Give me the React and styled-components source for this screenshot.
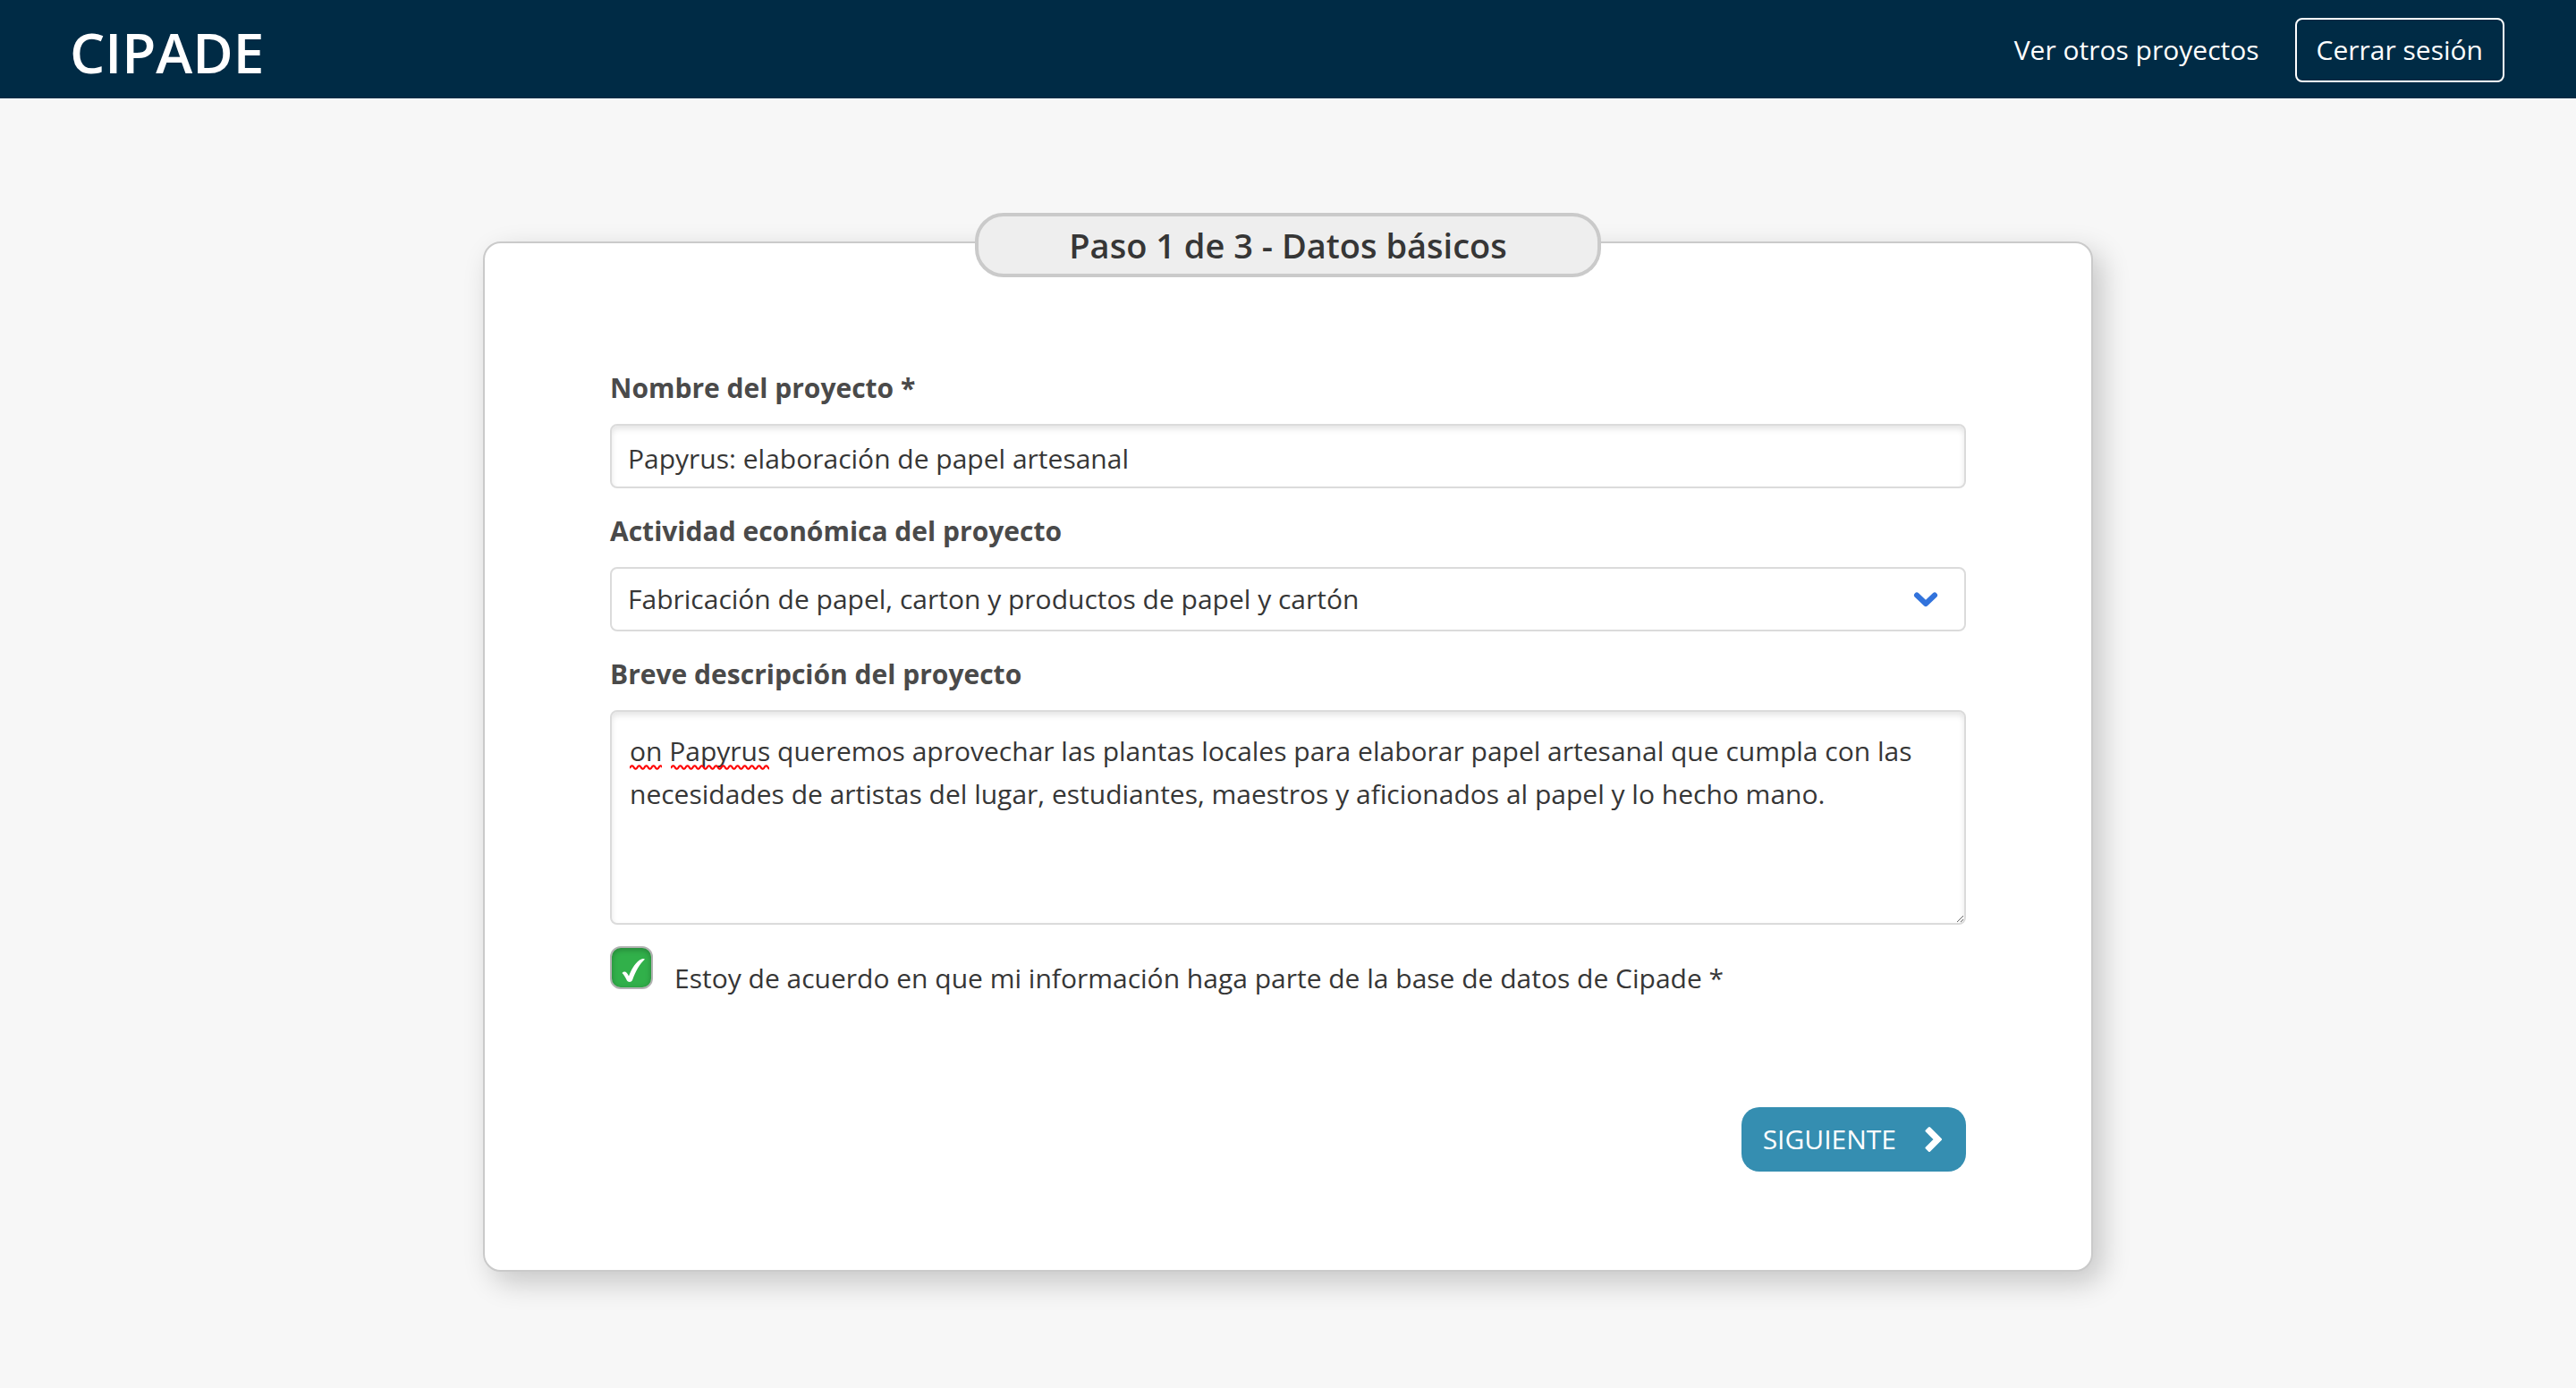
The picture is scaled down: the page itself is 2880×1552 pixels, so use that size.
import React, { useState } from "react";
import styled, { createGlobalStyle, css } from "styled-components";

const GlobalStyle = createGlobalStyle`
  *, *::before, *::after { box-sizing: border-box; }
  body {
    margin: 0;
    background: #f7f7f7;
    color: #363636;
    font-family: "Open Sans", "Noto Sans", sans-serif;
    font-size: 30px;
    line-height: 48px;
  }
  input, select, textarea, button { font: inherit; color: inherit; margin: 0; }
`;

const TopBar = styled.header`
  display: flex;
  align-items: center;
  justify-content: space-between;
  padding: 20px 80px 18px 78px;
  background: #002b45;
  color: #fff;
`;

const Brand = styled.a`
  padding-top: 4px;
  color: inherit;
  font-size: 62px;
  font-weight: 600;
  line-height: 64px;
  text-decoration: none;
`;

const Nav = styled.nav`
  display: flex;
  align-items: center;
  gap: 40px;
`;

const NavLink = styled.a`
  color: inherit;
  text-decoration: none;
`;

const LogoutButton = styled.button`
  height: 72px;
  padding: 0 22px;
  border: 2px solid #fff;
  border-radius: 8px;
  background: transparent;
`;

const Main = styled.main`
  display: flex;
  justify-content: center;
  padding: 160px 24px 130px;
`;

const Card = styled.section`
  display: flex;
  flex-direction: column;
  width: 100%;
  max-width: 1800px;
  border: 2px solid #cacaca;
  border-radius: 20px;
  background: #fff;
  box-shadow: 10px 12px 32px rgba(0, 0, 0, 0.2);
`;

const StepTitle = styled.h1`
  align-self: center;
  width: 700px;
  margin: -34px 0 0;
  padding: 8px 24px;
  border: 4px solid #cacaca;
  border-radius: 32px;
  background: #eee;
  font-size: 38px;
  font-weight: 600;
  line-height: 48px;
  text-align: center;
`;

const Form = styled.form`
  display: flex;
  flex-direction: column;
  gap: 24px;
  padding: 100px 140px 110px;
`;

const Field = styled.div`
  display: flex;
  flex-direction: column;
  gap: 16px;
`;

const Label = styled.label`
  color: #4a4a4a;
  font-weight: 700;
`;

const Control = styled.div`
  position: relative;
  display: flex;
`;

const boxed = css`
  width: 100%;
  border: 2px solid #dbdbdb;
  border-radius: 8px;
  background: #fff;
  outline: none;
`;

const TextInput = styled.input`
  ${boxed}
  height: 72px;
  padding: 4px 18px 0;
  box-shadow: inset 0 4px 6px rgba(10, 10, 10, 0.1);
`;

const Select = styled.select`
  ${boxed}
  height: 72px;
  padding: 0 80px 0 18px;
  appearance: none;
`;

const SelectArrow = styled.svg`
  position: absolute;
  top: 24px;
  right: 30px;
  width: 30px;
  height: 24px;
  pointer-events: none;
`;

const TextArea = styled.textarea`
  ${boxed}
  height: 240px;
  padding: 20px;
  resize: vertical;
  box-shadow: inset 0 4px 6px rgba(10, 10, 10, 0.1);
`;

const SpellMark = styled.svg`
  position: absolute;
  top: 61px;
  left: ${(p) => p.$start}px;
  width: ${(p) => p.$length}px;
  height: 6px;
  pointer-events: none;
`;

const ConsentRow = styled.div`
  display: flex;
  align-items: flex-start;
  gap: 24px;
`;

const TickBox = styled.div`
  position: relative;
  display: flex;
`;

const Checkbox = styled.input`
  appearance: none;
  width: 48px;
  height: 48px;
  border: 2px solid #b2b2b2;
  border-radius: 12px;
  background: #fff;
  box-shadow: inset 0 2px 6px rgba(0, 0, 0, 0.25);

  &:checked { background: #31b04a; }
  &:not(:checked) + svg { display: none; }
`;

const Tick = styled.svg`
  position: absolute;
  top: 0;
  left: 0;
  width: 48px;
  height: 48px;
  pointer-events: none;
`;

const ConsentLabel = styled.label`
  padding-top: 12px;
`;

const Actions = styled.div`
  display: flex;
  justify-content: flex-end;
  padding-top: 96px;
`;

const NextButton = styled.button`
  display: flex;
  align-items: center;
  gap: 32px;
  height: 72px;
  padding: 0 26px 0 24px;
  border: 0;
  border-radius: 20px;
  background: #358eb1;
  color: #fff;

  svg { width: 20px; height: 30px; }
`;

function Squiggle({ start, length }) {
  let d = "M0 4";
  for (let x = 0; x < length; x += 8) d += " q2 -4 4 -2 q2 4 4 2";
  return (
    <SpellMark $start={start} $length={length} aria-hidden="true">
      <path d={d} fill="none" stroke="#ff0000" strokeWidth="2" />
    </SpellMark>
  );
}

const DESCRIPTION =
  "on Papyrus queremos aprovechar las plantas locales para elaborar papel artesanal que cumpla con las necesidades de artistas del lugar, estudiantes, maestros y aficionados al papel y lo hecho mano.";

export default function App() {
  const [name, setName] = useState("Papyrus: elaboración de papel artesanal");
  const [description, setDescription] = useState(DESCRIPTION);
  const [agreed, setAgreed] = useState(true);

  return (
    <>
      <GlobalStyle />
      <TopBar>
        <Brand href="#inicio">CIPADE</Brand>
        <Nav>
          <NavLink href="#proyectos">Ver otros proyectos</NavLink>
          <LogoutButton type="button">Cerrar sesión</LogoutButton>
        </Nav>
      </TopBar>
      <Main>
        <Card>
          <StepTitle>Paso 1 de 3 - Datos básicos</StepTitle>
          <Form onSubmit={(e) => e.preventDefault()}>
            <Field>
              <Label htmlFor="nombre">Nombre del proyecto *</Label>
              <Control>
                <TextInput id="nombre" type="text" value={name} onChange={(e) => setName(e.target.value)} />
              </Control>
            </Field>
            <Field>
              <Label htmlFor="actividad">Actividad económica del proyecto</Label>
              <Control>
                <Select id="actividad" defaultValue="papel">
                  <option value="papel">Fabricación de papel, carton y productos de papel y cartón</option>
                </Select>
                <SelectArrow viewBox="0 0 30 24" aria-hidden="true">
                  <path d="M5 7.5 L15 17 L25 7.5" fill="none" stroke="#3273dc" strokeWidth="6" strokeLinecap="round" strokeLinejoin="round" />
                </SelectArrow>
              </Control>
            </Field>
            <Field>
              <Label htmlFor="descripcion">Breve descripción del proyecto</Label>
              <Control>
                <TextArea id="descripcion" spellCheck={false} value={description} onChange={(e) => setDescription(e.target.value)} />
                {description === DESCRIPTION && (
                  <>
                    <Squiggle start={22} length={36} />
                    <Squiggle start={68} length={110} />
                  </>
                )}
              </Control>
            </Field>
            <ConsentRow>
              <TickBox>
                <Checkbox id="acuerdo" type="checkbox" checked={agreed} onChange={(e) => setAgreed(e.target.checked)} />
                <Tick viewBox="0 0 48 48" aria-hidden="true">
                  <path d="M13.5 30 C16 27.5 18.5 28 21 33.5 C24 26 27 20 33 15.5 C35 14 38 13.5 39 14.5 C33 20 29 27 25 38 C24 40.5 20 40.5 19 38.5 C17 34.5 15.5 32 13.5 30 Z" fill="#fff" />
                </Tick>
              </TickBox>
              <ConsentLabel htmlFor="acuerdo">
                Estoy de acuerdo en que mi información haga parte de la base de datos de Cipade *
              </ConsentLabel>
            </ConsentRow>
            <Actions>
              <NextButton type="submit">
                SIGUIENTE
                <svg viewBox="0 0 20 30" aria-hidden="true">
                  <path d="M2 5.500 L5 2.500 L17.500 15 L5 27.500 L2 24.500 L11.500 15 Z" fill="#fff" stroke="#fff" strokeWidth="3" strokeLinejoin="round" />
                </svg>
              </NextButton>
            </Actions>
          </Form>
        </Card>
      </Main>
    </>
  );
}
